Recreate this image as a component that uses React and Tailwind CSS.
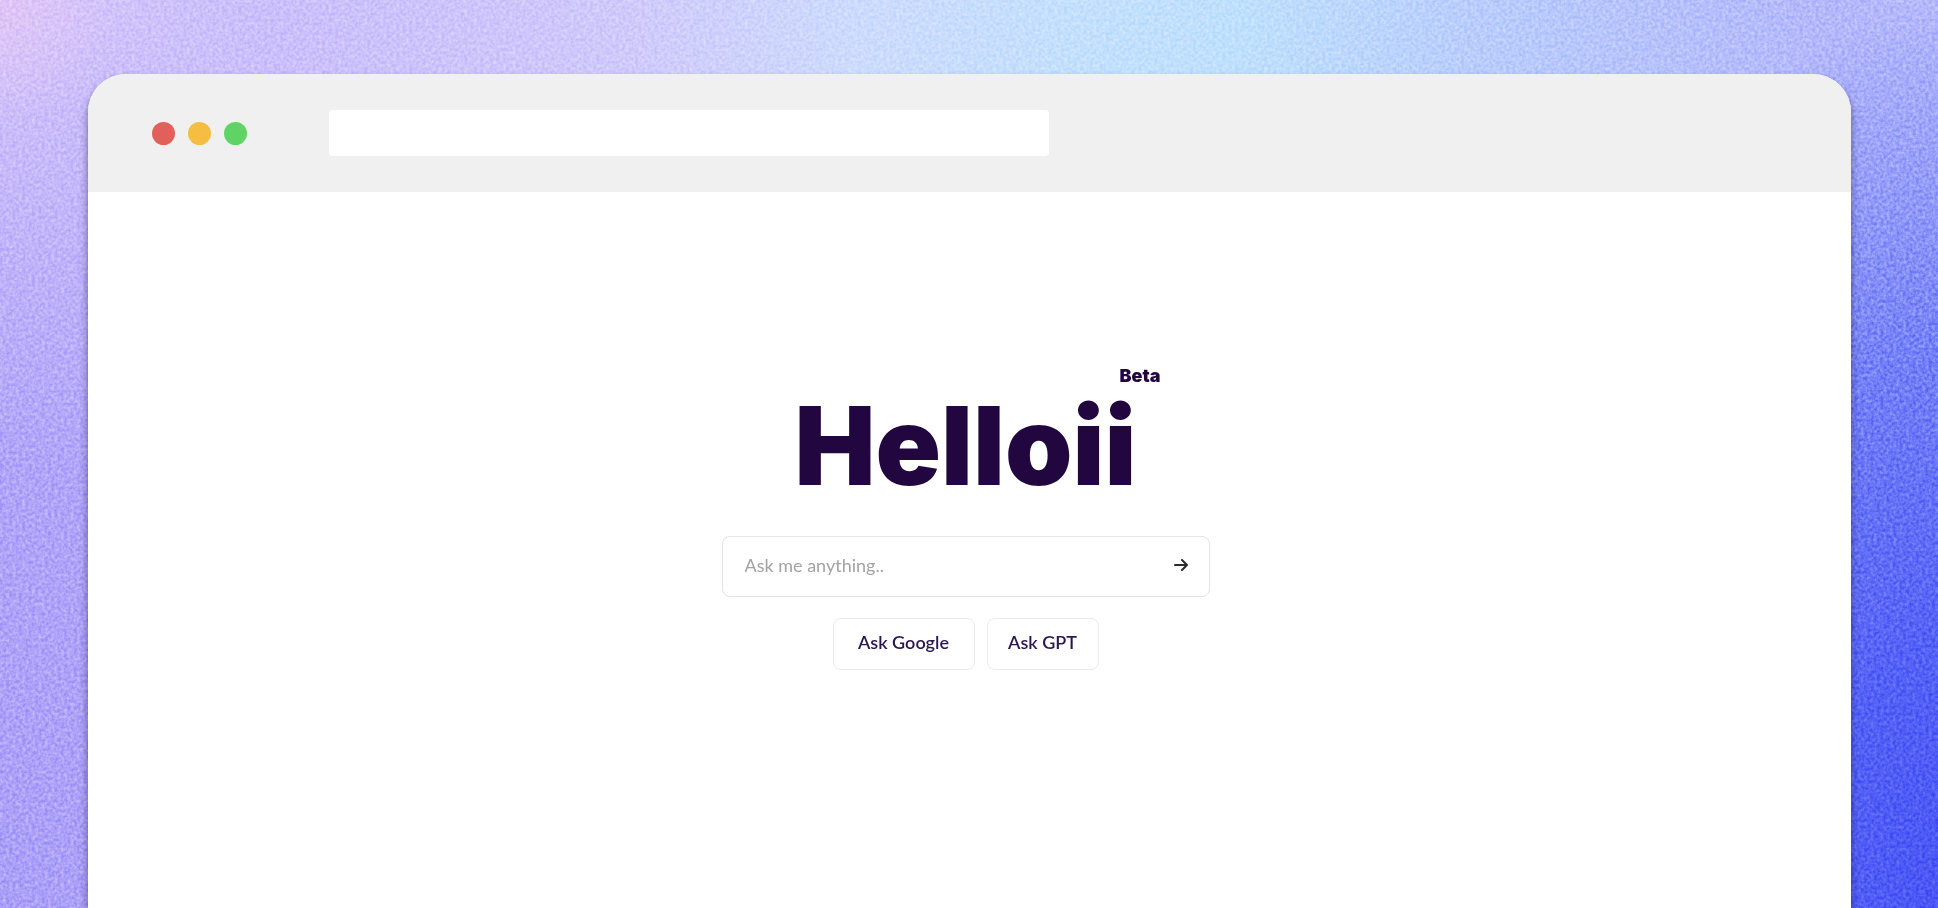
import { useState } from "react";

const trafficLights = [
  { label: "Close", color: "bg-[#e2605a]" },
  { label: "Minimize", color: "bg-[#f5bd41]" },
  { label: "Maximize", color: "bg-[#5fd365]" },
];

// wallpaper grain
function Grain() {
  return (
    <svg className="absolute inset-0 w-full h-full opacity-25 mix-blend-overlay" aria-hidden="true">
      <filter id="grain" colorInterpolationFilters="sRGB">
        <feTurbulence type="fractalNoise" baseFrequency="0.31" numOctaves="2" seed="4" />
        <feColorMatrix values="1.8 0 0 0 -0.4  1.8 0 0 0 -0.4  1.8 0 0 0 -0.4  0 0 0 0 1" />
      </filter>
      <rect width="100%" height="100%" filter="url(#grain)" />
    </svg>
  );
}

function ArrowIcon() {
  return (
    <svg className="w-[14px] h-[12px]" viewBox="0 0 14 12" fill="none" stroke="currentColor" strokeWidth="2" strokeLinecap="round" strokeLinejoin="round">
      <path d="M1 6h12M8 1l5 5-5 5" />
    </svg>
  );
}

export default function App() {
  const [query, setQuery] = useState("");
  const [url, setUrl] = useState("");

  const buttonClass = "h-[52px] rounded-lg border border-[#ececec] bg-white pb-1 text-lg font-semibold text-[#2a1650] hover:bg-gray-50";

  return (
    <div className="relative isolate flex min-h-screen flex-col overflow-hidden pt-[74px] pr-[87px] pl-22 font-['Lato',sans-serif] bg-[radial-gradient(circle_120px_at_0%_0%,#e0c6f6_0%,transparent_100%),radial-gradient(ellipse_420px_900px_at_100%_100%,#4a55f5_0%,#5562f6_30%,#7480f7_62%,transparent_100%),radial-gradient(ellipse_700px_900px_at_0%_100%,#aa9ff8_0%,#b0a4f9_50%,transparent_100%),linear-gradient(to_right,#d4c5fb_0%,#cabffb_14%,#d0c9fb_32%,#cddbfd_44%,#c3e0fd_56%,#bfe0fd_64%,#b9cdfc_76%,#b4b8fb_94%)]">
      <Grain />

      {/* Browser window */}
      <div className="relative flex flex-1 flex-col overflow-hidden rounded-t-[38px] bg-white shadow-[0_6px_8px_rgba(40,30,90,0.6)]">
        <header className="flex h-[118px] items-center bg-[#f0f0f0] pl-16">
          <div className="flex gap-[13px]">
            {trafficLights.map((light) => (
              <button key={light.label} type="button" aria-label={light.label} className={`h-[23px] w-[23px] rounded-full ${light.color}`} />
            ))}
          </div>
          <input
            type="text"
            aria-label="Address"
            value={url}
            onChange={(e) => setUrl(e.target.value)}
            className="ml-[82px] h-[46px] w-[720px] rounded-sm bg-white px-4 text-lg outline-none"
          />
        </header>

        {/* Search page */}
        <main className="flex flex-1 flex-col items-center pt-[172px] pr-2">
          <div className="flex flex-col font-['Inter',sans-serif] font-black text-[#22063f]">
            <span className="-mr-6 self-end text-lg leading-6">Beta</span>
            <h1 className="mt-1 text-[108px] leading-[108px]">Helloii</h1>
          </div>

          <form onSubmit={(e) => e.preventDefault()} className="mt-9 flex flex-col items-center">
            <div className="flex h-[61px] w-[488px] items-center rounded-lg border border-[#e4e4e4] bg-white pr-[21px] pb-1 pl-[22px]">
              <input
                type="text"
                aria-label="Ask me anything"
                placeholder="Ask me anything.."
                value={query}
                onChange={(e) => setQuery(e.target.value)}
                className="min-w-0 flex-1 text-lg text-[#22063f] outline-none placeholder:text-[#a3a3a3]"
              />
              <button type="submit" aria-label="Search" className="text-[#2b2b2b]">
                <ArrowIcon />
              </button>
            </div>
            <div className="mt-[21px] flex gap-3">
              <button type="button" className={`${buttonClass} w-[142px]`}>Ask Google</button>
              <button type="button" className={`${buttonClass} w-[112px]`}>Ask GPT</button>
            </div>
          </form>
        </main>
      </div>
    </div>
  );
}
